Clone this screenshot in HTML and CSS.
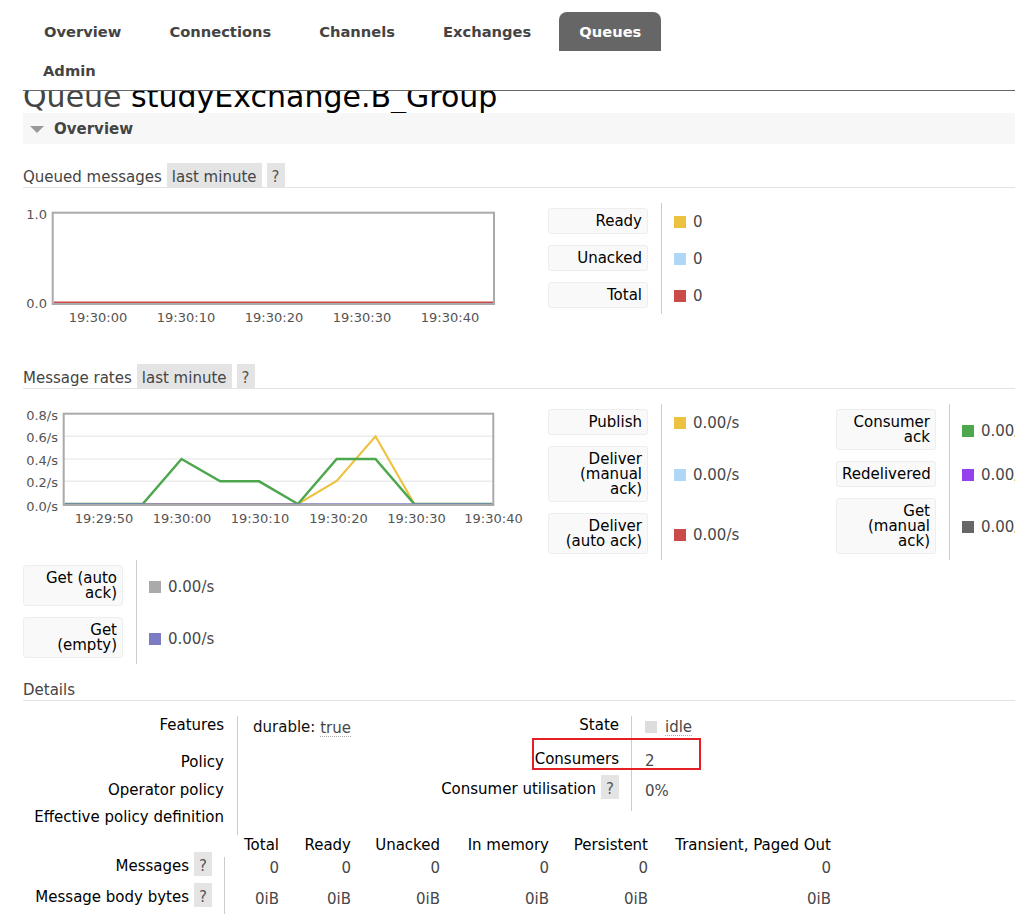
FILE: index.html
```html
<!DOCTYPE html>
<html lang="en">
<head>
<meta charset="utf-8">
<title>RabbitMQ Management - Queue studyExchange.B_Group</title>
<link rel="stylesheet" href="styles.css">
</head>
<body>
<div class="page">
  <header class="header">
    <ul class="nav">
      <li class="nav-item">Overview</li>
      <li class="nav-item">Connections</li>
      <li class="nav-item">Channels</li>
      <li class="nav-item">Exchanges</li>
      <li class="nav-item active">Queues</li>
      <li class="nav-item">Admin</li>
    </ul>
  </header>

  <div class="title-clip">
    <h1 class="title"><span class="title-kind">Queue</span> studyExchange.B_Group</h1>
  </div>

  <section class="section">
    <div class="section-bar"><span class="tri"></span><h2 class="section-title">Overview</h2></div>
    <div class="section-body">
      <h3 class="subhead">Queued messages<span class="chip">last minute</span><span class="chip chip-q">?</span></h3>
      <div class="chart-row">
        <svg class="chart" viewBox="23 203 500 149" xmlns="http://www.w3.org/2000/svg">
          <line x1="53.7" y1="302.8" x2="493.7" y2="302.8" stroke="#cb4b4b" stroke-width="2.4"/>
          <rect x="52.7" y="212.7" width="441.3" height="91.3" fill="none" stroke="#aaa" stroke-width="2"/>
          <g class="axis">
            <text x="47" y="218.7" text-anchor="end">1.0</text>
            <text x="47" y="307.7" text-anchor="end">0.0</text>
            <text x="98" y="322.4" text-anchor="middle">19:30:00</text>
            <text x="186" y="322.4" text-anchor="middle">19:30:10</text>
            <text x="274" y="322.4" text-anchor="middle">19:30:20</text>
            <text x="362" y="322.4" text-anchor="middle">19:30:30</text>
            <text x="450" y="322.4" text-anchor="middle">19:30:40</text>
          </g>
        </svg>
        <div class="legend">
          <div class="legend-label"><div class="legend-box">Ready</div></div>
          <div class="legend-value"><span class="swatch sw-yellow"></span>0</div>
          <div class="legend-label"><div class="legend-box">Unacked</div></div>
          <div class="legend-value"><span class="swatch sw-blue"></span>0</div>
          <div class="legend-label"><div class="legend-box">Total</div></div>
          <div class="legend-value"><span class="swatch sw-red"></span>0</div>
        </div>
      </div>

      <h3 class="subhead">Message rates<span class="chip">last minute</span><span class="chip chip-q">?</span></h3>
      <div class="chart-row">
        <svg class="chart" viewBox="23 404 500 149" xmlns="http://www.w3.org/2000/svg">
          <line x1="63.7" y1="436.3" x2="493.3" y2="436.3" stroke="#ececec" stroke-width="1.5"/>
          <line x1="63.7" y1="459" x2="493.3" y2="459" stroke="#ececec" stroke-width="1.5"/>
          <line x1="63.7" y1="481.3" x2="493.3" y2="481.3" stroke="#ececec" stroke-width="1.5"/>
          <polyline points="64.7,504 297.9,504 336.7,481 375.5,436.3 414.3,504 492.3,504" fill="none" stroke="#edc240" stroke-width="2.2"/>
          <polyline points="64.7,504 142.7,504 181.5,459 220.3,481.3 259.1,481.3 297.9,504 336.7,459 375.5,459 414.3,504 492.3,504" fill="none" stroke="#4da74d" stroke-width="2.5"/>
          <line x1="64.7" y1="504.6" x2="492.3" y2="504.6" stroke="#7c7cc4" stroke-width="2.8"/>
          <rect x="63.7" y="413.7" width="429.6" height="91.3" fill="none" stroke="#aaa" stroke-width="2"/>
          <g class="axis">
            <text x="58" y="420.3" text-anchor="end">0.8/s</text>
            <text x="58" y="442" text-anchor="end">0.6/s</text>
            <text x="58" y="465.2" text-anchor="end">0.4/s</text>
            <text x="58" y="487" text-anchor="end">0.2/s</text>
            <text x="58" y="510.5" text-anchor="end">0.0/s</text>
            <text x="104" y="522.8" text-anchor="middle">19:29:50</text>
            <text x="182" y="522.8" text-anchor="middle">19:30:00</text>
            <text x="260" y="522.8" text-anchor="middle">19:30:10</text>
            <text x="338.5" y="522.8" text-anchor="middle">19:30:20</text>
            <text x="416.5" y="522.8" text-anchor="middle">19:30:30</text>
            <text x="493.5" y="522.8" text-anchor="middle">19:30:40</text>
          </g>
        </svg>
        <div class="legend">
          <div class="legend-label"><div class="legend-box">Publish</div></div>
          <div class="legend-value"><span class="swatch sw-yellow"></span>0.00/s</div>
          <div class="legend-label"><div class="legend-box">Deliver (manual ack)</div></div>
          <div class="legend-value"><span class="swatch sw-blue"></span>0.00/s</div>
          <div class="legend-label"><div class="legend-box">Deliver (auto ack)</div></div>
          <div class="legend-value"><span class="swatch sw-red"></span>0.00/s</div>
        </div>
        <div class="legend">
          <div class="legend-label"><div class="legend-box">Consumer ack</div></div>
          <div class="legend-value"><span class="swatch sw-green"></span>0.00/s</div>
          <div class="legend-label"><div class="legend-box">Redelivered</div></div>
          <div class="legend-value"><span class="swatch sw-purple"></span>0.00/s</div>
          <div class="legend-label"><div class="legend-box">Get (manual ack)</div></div>
          <div class="legend-value"><span class="swatch sw-dark"></span>0.00/s</div>
        </div>
        <div class="legend">
          <div class="legend-label"><div class="legend-box">Get (auto ack)</div></div>
          <div class="legend-value"><span class="swatch sw-gray"></span>0.00/s</div>
          <div class="legend-label"><div class="legend-box">Get (empty)</div></div>
          <div class="legend-value"><span class="swatch sw-violet"></span>0.00/s</div>
        </div>
      </div>

      <h3 class="subhead">Details</h3>
      <div class="details-top">
        <div class="facts facts-left">
          <div class="fact-label">Features</div>
          <div class="fact-value"><span class="fact-key">durable:</span> <span class="dotted">true</span></div>
          <div class="fact-label">Policy</div>
          <div class="fact-value"></div>
          <div class="fact-label">Operator policy</div>
          <div class="fact-value"></div>
          <div class="fact-label">Effective policy definition</div>
          <div class="fact-value"></div>
        </div>
        <div class="facts facts-right">
          <div class="fact-label">State</div>
          <div class="fact-value"><span class="state"><span class="state-swatch"></span><span class="dotted">idle</span></span></div>
          <div class="fact-label">Consumers</div>
          <div class="fact-value">2</div>
          <div class="fact-label">Consumer utilisation<span class="chip chip-q">?</span></div>
          <div class="fact-value">0%</div>
          <div class="callout"></div>
        </div>
      </div>

      <div class="facts-bottom">
        <div></div>
        <div class="fb-head">Total</div>
        <div class="fb-head">Ready</div>
        <div class="fb-head">Unacked</div>
        <div class="fb-head">In memory</div>
        <div class="fb-head">Persistent</div>
        <div class="fb-head">Transient, Paged Out</div>

        <div class="fb-label">Messages<span class="chip chip-q">?</span></div>
        <div class="fb-num fb-first">0</div>
        <div class="fb-num">0</div>
        <div class="fb-num">0</div>
        <div class="fb-num">0</div>
        <div class="fb-num">0</div>
        <div class="fb-num">0</div>

        <div class="fb-label">Message body bytes<span class="chip chip-q">?</span></div>
        <div class="fb-num fb-first">0iB</div>
        <div class="fb-num">0iB</div>
        <div class="fb-num">0iB</div>
        <div class="fb-num">0iB</div>
        <div class="fb-num">0iB</div>
        <div class="fb-num">0iB</div>
      </div>
    </div>
  </section>
</div>
</body>
</html>
```

FILE: styles.css
```css
html {
  background: #fff;
}

body {
  margin: 0;
  font-family: "DejaVu Sans", Verdana, sans-serif;
  font-size: 15px;
  color: #484848;
  background: #fff;
  overflow-x: hidden;
}

.page {
  width: 1150px;
  padding-left: 23px;
}

/* header / nav */
.header {
  padding-top: 12px;
  border-bottom: 1px solid #666;
}

.nav {
  display: flex;
  flex-wrap: wrap;
  column-gap: 8px;
  max-width: 700px;
  list-style: none;
  margin: 0;
  padding: 0;
}

.nav-item {
  height: 39px;
  line-height: 39px;
  padding: 0 20px;
  font-size: 14.7px;
  font-weight: bold;
  color: #444;
}

.nav-item:first-child {
  padding-left: 21px;
}

.nav-item.active {
  background: #666;
  color: #fff;
  border-radius: 8px 8px 0 0;
}

/* title */
.title-clip {
  height: 22px;
  overflow: hidden;
}

.title {
  margin: -12px 0 0;
  font-size: 30px;
  line-height: 35px;
  font-weight: normal;
  color: #000;
  white-space: nowrap;
}

.title-kind {
  color: #444;
}

/* section */
.section-bar {
  display: flex;
  align-items: center;
  height: 31px;
  background: #f7f7f7;
  padding-left: 7px;
}

.tri {
  width: 0;
  height: 0;
  border-left: 7.5px solid transparent;
  border-right: 7.5px solid transparent;
  border-top: 7px solid #999;
  margin-right: 10px;
  margin-top: 1px;
}

.section-title {
  margin: 0;
  font-size: 15px;
  font-weight: bold;
  color: #444;
}

.section-body {
  padding-top: 7px;
}

.subhead {
  margin: 13px 0 0;
  padding-top: 2px;
  height: 21px;
  line-height: 23px;
  font-size: 15px;
  font-weight: normal;
  color: #444;
  border-bottom: 1px solid #e2e2e2;
}

.chip {
  background: #e4e4e4;
  padding: 5px 5px 1px;
  margin-left: 5px;
  color: #444;
}

.chip-q {
  color: #555;
}

/* charts */
.chart-row {
  display: flex;
  flex-wrap: wrap;
  align-items: flex-start;
  column-gap: 25px;
  margin-top: 15px;
}

.chart {
  display: block;
  width: 500px;
  height: 149px;
}

.axis text {
  font-family: "DejaVu Sans", Verdana, sans-serif;
  font-size: 13px;
  fill: #545454;
}

/* legends */
.legend {
  display: grid;
  grid-template-columns: 113px 150px;
}

.legend-label {
  padding: 5px 13px 6px 0;
}

.legend-box {
  width: 100px;
  box-sizing: border-box;
  border: 1px solid #eee;
  border-radius: 3px;
  background: #f9f9f9;
  padding: 5px 5px 4px 5px;
  text-align: right;
  line-height: 15px;
  color: #000;
}

.legend-value {
  display: flex;
  align-items: center;
  border-left: 1px solid #ccc;
  padding-left: 12px;
  padding-top: 1px;
  color: #484848;
  white-space: nowrap;
}

.swatch {
  width: 12px;
  height: 12px;
  margin-right: 7px;
  flex: none;
}

.sw-yellow { background: #edc240; }
.sw-blue { background: #afd8f8; }
.sw-red { background: #cb4b4b; }
.sw-green { background: #4da74d; }
.sw-purple { background: #9440ed; }
.sw-dark { background: #666; }
.sw-gray { background: #aaa; }
.sw-violet { background: #7c7cc4; }

/* details */
.details-top {
  display: flex;
  margin-top: 15px;
}

.facts {
  display: grid;
  align-items: start;
}

.facts-left {
  grid-template-columns: 214px 192px;
  grid-template-rows: 37px 28px 27px 27px;
}

.facts-right {
  position: relative;
  grid-template-columns: 202px 200px;
  grid-template-rows: 34px 30px 31px;
}

.fact-label {
  text-align: right;
  padding-right: 13px;
  padding-top: 2px;
  line-height: 15px;
  color: #000;
  white-space: nowrap;
}

.facts-right .fact-label {
  padding-right: 12px;
}

.fact-value {
  align-self: stretch;
  border-left: 1px solid #ccc;
  padding-left: 15px;
  padding-top: 3.5px;
  line-height: 15px;
  color: #484848;
}

.facts-right .fact-value {
  padding-left: 13px;
}

.fact-key {
  color: #111;
  vertical-align: 1.5px;
}

.dotted {
  display: inline-block;
  line-height: 15px;
  border-bottom: 1px dotted #aaa;
}

.state {
  display: flex;
  align-items: flex-start;
}

.state-swatch {
  width: 12px;
  height: 12px;
  margin-top: 1px;
  margin-right: 8px;
  background: #ddd;
}

.callout {
  position: absolute;
  left: 103px;
  top: 22px;
  width: 169px;
  height: 32px;
  box-sizing: border-box;
  border: 2px solid #e41f26;
}

.facts-bottom {
  display: grid;
  grid-template-columns: 201px 68px 72px 89px 109px 99px 183px;
  grid-template-rows: 22px 31px 31px;
}

.fb-head {
  text-align: right;
  padding-right: 13px;
  padding-top: 3px;
  line-height: 15px;
  color: #000;
  white-space: nowrap;
}

.fb-label {
  text-align: right;
  padding-right: 12px;
  padding-top: 2px;
  line-height: 15px;
  color: #000;
  white-space: nowrap;
}

.fb-num {
  text-align: right;
  padding-right: 13px;
  padding-top: 4px;
  line-height: 15px;
  color: #484848;
}

.fb-first {
  border-left: 1px solid #ccc;
}
```
